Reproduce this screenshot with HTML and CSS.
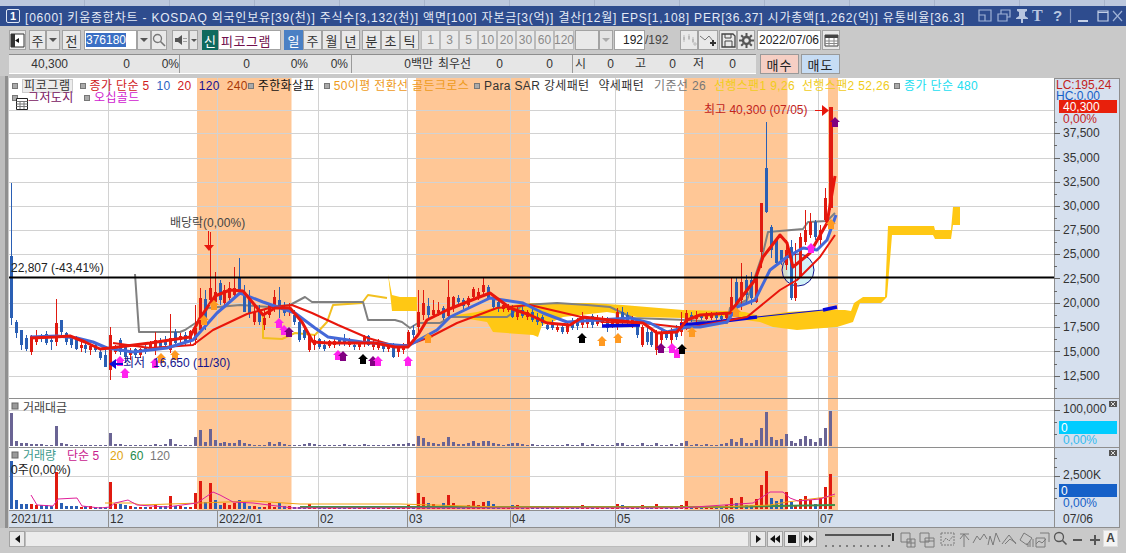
FILE: index.html
```html
<!DOCTYPE html>
<html lang="ko">
<head>
<meta charset="utf-8">
<title>키움종합차트</title>
<link rel="stylesheet" href="styles.css">
</head>
<body>
<div class="app">
  <div class="tabs"></div>
  <header class="title">
    <span class="badge">1</span>
    <span class="title-text">[0600] 키움종합차트 - KOSDAQ 외국인보유[39(천)] 주식수[3,132(천)] 액면[100] 자본금[3(억)] 결산[12월] EPS[1,108] PER[36.37] 시가총액[1,262(억)] 유통비율[36.3]</span>
    <svg class="title-icons" width="146" height="18" viewBox="0 0 146 18">
      <g fill="none" stroke="#9fb2d6" stroke-width="1.2">
        <path d="M1 3h12v11H1zM1 8h6v6"/>
        <path d="M20 7h9v7h-9zM23 7V3h9v7h-3"/>
        <path d="M92.5 2v14" stroke="#7f93bd"/>
        <path d="M120 4h10v10h-10zM120 5.5h10" stroke="#c4d0e6"/>
        <path d="M135 4l9 10M144 4l-9 10" stroke="#9fb2d6"/>
      </g>
      <path d="M39 2h10v2l-2 1v4l3 2v1h-5v4h-2v-4h-5v-1l3-2V5l-2-1z" fill="#b8c6e0"/>
      <text x="54" y="14" class="ti-t">T</text>
      <text x="75" y="14" class="ti-q">?</text>
      <path d="M100 13h10v2h-10z" fill="#c4d0e6"/>
    </svg>
  </header>

  <div class="tb">
    <button class="b w17 ico"><svg width="15" height="15" viewBox="0 0 15 15"><path d="M1 1h13v13H1z" fill="#fff" stroke="#333"/><path d="M1 1h4v13H1z" fill="#333"/><path d="M9 5L5 7.5 9 10z" fill="#111"/></svg></button>
    <button class="b w17 ml3">주</button>
    <button class="b w14 drop"><i class="tri"></i></button>
    <button class="b w19 ml2">전</button>
    <span class="field w53 ml3"><span class="sel">376180</span></span>
    <button class="b w14 drop"><i class="tri"></i></button>
    <button class="b w16 ico"><svg width="14" height="14" viewBox="0 0 14 14"><circle cx="5.5" cy="5.5" r="4" fill="none" stroke="#777" stroke-width="1.3"/><path d="M8.5 8.5l4.5 4.5" stroke="#777" stroke-width="1.6"/></svg></button>
    <button class="b w17 ml5 ico"><svg width="14" height="14" viewBox="0 0 14 14"><path d="M1 5h3l4-3v10l-4-3H1z" fill="#555"/><path d="M10 5v1M10 8v1M12 5v1M12 8v1" stroke="#555"/></svg></button>
    <button class="b w9 drop"><i class="tri small"></i></button>
    <span class="sin ml4">신</span>
    <span class="field w63 pico">피코그램</span>
    <button class="b w19 ml3 on">일</button>
    <button class="b w19">주</button>
    <button class="b w19">월</button>
    <button class="b w19">년</button>
    <button class="b w19 ml2">분</button>
    <button class="b w19">초</button>
    <button class="b w19">틱</button>
    <button class="b w19 ml2 dim">1</button>
    <button class="b w19 dim">3</button>
    <button class="b w19 dim">5</button>
    <button class="b w19 dim">10</button>
    <button class="b w19 dim">20</button>
    <button class="b w19 dim">30</button>
    <button class="b w19 dim">60</button>
    <button class="b w20 dim">120</button>
    <span class="b w24 ml1"></span>
    <button class="b w14 drop"><i class="tri light"></i></button>
    <span class="field w31 ml1 right">192</span>
    <span class="count">/192</span>
    <button class="b w18 ml8 ico"><svg width="16" height="14" viewBox="0 0 16 14"><path d="M3 2v7M8 1v6M12 4v6" stroke="#bbb"/><path d="M2 4h2v3H2zM7 3h2v3H7zM11 6h2v3h-2z" fill="#bbb"/><path d="M12 11h4M14 9v4" stroke="#bbb"/></svg></button>
    <button class="b w20 ico"><svg width="18" height="14" viewBox="0 0 18 14"><path d="M1 3l5 4 4-4 4 5" fill="none" stroke="#777"/><path d="M11 10h6M14 7v6" stroke="#333" stroke-width="2"/></svg></button>
    <button class="b w18 ml1 ico"><svg width="15" height="15" viewBox="0 0 15 15"><path d="M1 1h11l2 2v11H1z" fill="none" stroke="#444" stroke-width="1.3"/><path d="M4 1v4h6V1M4 14V8h7v6" fill="none" stroke="#444"/></svg></button>
    <button class="b w18 ico"><svg width="15" height="15" viewBox="0 0 15 15"><circle cx="7.5" cy="7.5" r="3.5" fill="none" stroke="#555" stroke-width="2.4"/><path d="M7.5 0v3M7.5 12v3M0 7.5h3M12 7.5h3M2.2 2.2l2 2M10.8 10.8l2 2M12.8 2.2l-2 2M4.2 10.8l-2 2" stroke="#555" stroke-width="2"/></svg></button>
    <span class="field w64 ml2 center">2022/07/06</span>
    <button class="b w18 ml1 ico"><svg width="15" height="13" viewBox="0 0 15 13"><path d="M1 1h13v11H1z" fill="#fff" stroke="#444"/><path d="M1 1h13v3H1z" fill="#444"/><path d="M1 7h13M1 9.5h13M5 4v8M10 4v8" stroke="#888"/></svg></button>
  </div>

  <div class="tb2">
    <div class="stats">
      <span>40,300</span><span>0</span><span class="sep">0%</span><span>0</span><span>0%</span><span class="sep pad">0%</span>
      <span>0백만</span><span>최우선</span><span>0</span><span>0</span><span class="sep"></span>
      <span>시</span><span>0</span><span>고</span><span>0</span><span>저</span><span>0</span><span></span>
    </div>
    <button class="trade buy">매수</button>
    <button class="trade sell">매도</button>
  </div>

  <main class="chart">
    <svg id="plot" width="1112" height="452" viewBox="9 76 1112 452">
      <rect x="9" y="78" width="1045" height="433" fill="#fff"/>
      <g fill="#ffc796">
        <rect x="197" y="78" width="94.5" height="432"/>
        <rect x="416" y="78" width="114" height="432"/>
        <rect x="684" y="78" width="103.5" height="432"/>
        <rect x="828" y="78" width="10" height="432"/>
      </g>
      <path id="grid" fill="none" stroke="#d2d2d2" d="M9 110.5H1054M9 133.5H1054M9 158.5H1054M9 182.5H1054M9 206.5H1054M9 230.5H1054M9 254.5H1054M9 303.5H1054M9 327.5H1054M9 351.5H1054M9 376.5H1054M9 410.5H1054M9 476.5H1054M108.5 78V511M217.5 78V511M318.5 78V511M407.5 78V511M510.5 78V511M615.5 78V511M719.5 78V511M818.5 78V511"/>
      <path class="cloud" d="M388 274L392 295L400 297H417V311H392ZM450 316L477 312L497 307L530 303L590 303L623 305L683 310L730 311L745 312L760 316L787 312L823 310L845 310L851 311L854 303L863 297H881L885 297L888 226H934L935 230H951L953 207H960V225H953L951 239H935L933 235H892L887 297L881 303H860L853 322L837 327L797 330L773 327L760 322L745 320L735 316L683 318L637 317L607 312L563 317L550 323L542 325L538 337L533 335L493 332L487 322L463 318Z"/>
      <polyline class="ln gold" points="263,315 263,338 282,339 295,333 315,335 327,322 333,305 362,303 368,295 387,298"/>
      <polyline class="ln gray" points="135,274 139,332 180,332 185,330 200,320 208,308 240,305 270,307 290,305 305,297 312,302 335,302 363,302 368,320 395,320 402,322 410,328 418,323 440,323 450,317 507,317 523,305 557,303 587,305 610,307 633,318 687,320 727,323 730,308 747,300 763,253 768,232 803,229 808,222 827,221 835,213"/>
      <circle cx="798" cy="270" r="16" fill="#aeeaf0" fill-opacity=".55" stroke="#14148c"/>
      <g id="candles"></g>
      <polyline class="ln span" points="602,326 640,325"/>
      <polyline class="ln span" points="680,325 707,323 757,317"/>
      <polyline class="ln span thin" points="757,317 823,310"/>
      <polyline class="ln span" points="823,310 837,307"/>
      <polyline class="ln ma20" points="113,343 150,348 193,345 213,330 247,314 273,307 292,305 312,313 338,325 368,338 392,345 408,345 430,337 457,323 497,308 530,305 560,312 603,322 643,323 687,328 747,317 780,290 797,280 820,257 835,235"/>
      <polyline class="ln ma10" points="30,337 57,336 77,338 93,342 107,348 133,352 167,348 193,340 217,313 240,293 263,302 295,313 315,328 328,337 362,342 395,345 408,346 437,330 450,317 490,298 523,303 543,313 567,322 630,318 650,323 667,332 687,327 700,327 727,322 737,307 755,300 770,270 787,257 803,248 817,250 827,240 836,215"/>
      <polyline class="ln ma5" points="30,338 55,337 70,336 85,342 100,349 110,348 150,343 190,337 200,318 215,296 230,290 243,291 263,315 275,308 290,308 302,322 313,342 328,343 375,343 395,347 408,347 418,335 427,320 447,310 477,298 490,293 510,308 530,315 547,323 570,325 583,317 610,320 643,323 657,333 677,332 687,320 700,315 730,313 737,303 755,280 763,257 780,235 787,243 793,267 810,253 827,223 835,176"/>
      <path d="M9 277.5H1054" stroke="#000" stroke-width="2"/>
      <g id="arrows"></g>
      <g fill="#e8160c">
        <path d="M208.5 231V245" stroke="#e8160c"/>
        <path d="M204 245h10l-5 6z"/>
        <path d="M815 110.5H823" stroke="#e8160c"/>
        <path d="M822 105l7 5.5-7 5.5z"/>
      </g>
      <path d="M109 364l7-5v4h7v2h-7v4z" fill="#0c0cd8"/>
      <text class="t" x="11" y="272">22,807 (-43,41%)</text>
      <text class="t lab" x="170" y="227">배당락(0,00%)</text>
      <text class="t navy" x="123" y="367">최저</text>
      <text class="t navy" x="153" y="367">16,650 (11/30)</text>
      <text class="t redt" x="704" y="114">최고 40,300 (07/05)</text>
      <path d="M9 398.5H1054M9 447.5H1054" stroke="#8e8e8e"/>
      <g id="bars"></g>
      <polyline class="vl" stroke="#3f8f4a" stroke-width="2" points="300,507 720,507 835,505"/>
      <polyline class="vl" stroke="#f0a010" points="105,503 133,503 140,505 200,503 253,501 300,504 400,504 500,507 720,507 770,505 787,502 835,496"/>
      <polyline class="vl" stroke="#e0209a" points="31,495 37,505 53,506 58,499 77,498 82,506 100,508 110,507 115,503 128,500 137,505 167,507 197,503 213,492 220,495 233,502 253,503 293,508 400,508 680,508 753,503 770,492 783,492 790,498 798,501 820,499 835,494"/>
      <rect x="12" y="403" width="6" height="6" fill="#9a9a9a" stroke="#666"/>
      <text class="t lab" x="23" y="412">거래대금</text>
      <rect x="12" y="452" width="6" height="6" fill="#9a9a9a" stroke="#666"/>
      <text class="t teal" x="23" y="460">거래량</text>
      <text class="t mag" x="67" y="460">단순 5</text>
      <text class="t ogold" x="110" y="460">20</text>
      <text class="t green" x="130" y="460">60</text>
      <text class="t gr" x="150" y="460">120</text>
      <text class="t" x="11" y="474">0주(0,00%)</text>

      <!-- time axis -->
      <rect x="9" y="511" width="1045" height="17" fill="#d6e0ee"/>
      <path d="M9 510.5H1120M9 527.5H1120M108.5 511V528M217.5 511V528M318.5 511V528M407.5 511V528M510.5 511V528M615.5 511V528M719.5 511V528M818.5 511V528" stroke="#8e8e8e"/>
      <text class="t ax" x="11" y="523">2021/11</text>
      <text class="t ax" x="110" y="523">12</text>
      <text class="t ax" x="219" y="523">2022/01</text>
      <text class="t ax" x="320" y="523">02</text>
      <text class="t ax" x="409" y="523">03</text>
      <text class="t ax" x="512" y="523">04</text>
      <text class="t ax" x="617" y="523">05</text>
      <text class="t ax" x="721" y="523">06</text>
      <text class="t ax" x="820" y="523">07</text>

      <!-- value axis -->
      <rect x="1054.5" y="78.5" width="65" height="449" fill="#d6e0ee" stroke="#8e8e8e"/>
      <path d="M1054 398.5H1120M1054 447.5H1120" stroke="#8e8e8e"/>
      <path d="M1054 133.5h6M1054 158.5h6M1054 182.5h6M1054 206.5h6M1054 230.5h6M1054 254.5h6M1054 278.5h6M1054 303.5h6M1054 327.5h6M1054 351.5h6M1054 376.5h6M1054 410.5h6M1054 476.5h6M1054 122.5h3M1054 145.5h3M1054 170.5h3M1054 194.5h3M1054 218.5h3M1054 242.5h3M1054 266.5h3M1054 291.5h3M1054 315.5h3M1054 339.5h3M1054 364.5h3M1054 388.5h3M1054 422.5h3M1054 434.5h3M1054 458.5h3M1054 467.5h3M1054 488.5h3M1054 498.5h3" stroke="#666"/>
      <text class="t redt" x="1056" y="89">LC:195,24</text>
      <text class="t bluet" x="1056" y="100">HC:0,00</text>
      <rect x="1059" y="100" width="58" height="13" fill="#e8200c"/>
      <text class="t wh" x="1063" y="111">40,300</text>
      <text class="t redt" x="1063" y="123">0,00%</text>
      <text class="t ax" x="1063" y="137">37,500</text>
      <text class="t ax" x="1063" y="162">35,000</text>
      <text class="t ax" x="1063" y="186">32,500</text>
      <text class="t ax" x="1063" y="210">30,000</text>
      <text class="t ax" x="1063" y="234">27,500</text>
      <text class="t ax" x="1063" y="258">25,000</text>
      <text class="t ax" x="1063" y="283">22,500</text>
      <text class="t ax" x="1063" y="307">20,000</text>
      <text class="t ax" x="1063" y="331">17,500</text>
      <text class="t ax" x="1063" y="356">15,000</text>
      <text class="t ax" x="1063" y="380">12,500</text>
      <text class="t ax" x="1063" y="413">100,000</text>
      <rect x="1059" y="421" width="58" height="13" fill="#00ccff"/>
      <text class="t wh" x="1061" y="432">0</text>
      <text class="t cyan" x="1063" y="444">0,00%</text>
      <text class="t ax" x="1063" y="479">2,500K</text>
      <rect x="1059" y="484" width="58" height="13" fill="#1560c8"/>
      <text class="t wh" x="1061" y="495">0</text>
      <text class="t bluet" x="1063" y="507">0,00%</text>
      <text class="t ax" x="1063" y="523">07/06</text>
      <g fill="#555"><rect x="1109" y="401" width="8" height="6"/><rect x="1109" y="450" width="8" height="6"/></g>
      <path d="M1111 402l4 4M1115 402l-4 4M1111 451l4 4M1115 451l-4 4" stroke="#ddd"/>
    </svg>

    <div class="legend">
      <div class="lrow">
        <i class="sq"></i><span class="pill">피코그램</span>
        <i class="sq"></i><span class="c-red">종가 단순 5</span><span class="c-blue">10</span><span class="c-red">20</span><span class="c-navy">120</span><span class="c-brown mr0">240</span>
        <i class="sq"></i><span class="c-black mr9">주한화살표</span>
        <i class="sq"></i><span class="c-orange mr5">50이평 전환선 골든크로스</span>
        <i class="sq"></i><span class="c-dark mr9">Para SAR 강세패턴</span><span class="c-dark mr10">약세패턴</span><span class="c-gray mr8">기준선 26</span><span class="c-gold">선행스팬1 9,26</span><span class="c-gold mr4">선행스팬2 52,26</span>
        <i class="sq"></i><span class="c-cyan">종가 단순 480</span>
      </div>
      <div class="lrow">
        <i class="sq"></i><span class="c-plum doji">그저도지</span>
        <i class="sq gap2"></i><span class="c-mag">오십골드</span>
      </div>
      <svg class="tableico" width="12" height="12" viewBox="0 0 12 12"><path d="M.5.5h11v11H.5z" fill="#fff" stroke="#222"/><path d="M.5 3.5h11M.5 6h11M.5 8.5h11M4 3v8M8 3v8" stroke="#777"/></svg>
    </div>
  </main>

  <footer class="bottom">
    <button class="b sbtn ico"><i class="tl"></i></button>
    <span class="track"></span>
    <button class="b pbtn ico"><i class="tr"></i></button>
    <button class="b pbtn ico"><i class="tl"></i><i class="tl"></i></button>
    <button class="b pbtn ico"><i class="st"></i></button>
    <button class="b pbtn ico"><i class="tr"></i><i class="tr"></i></button>
    <svg class="tools" width="280" height="18" viewBox="0 0 280 18">
      <path d="M2 5H68" stroke="#555" stroke-width="2"/><path d="M70 3v8" stroke="#333" stroke-width="2"/>
      <path d="M3 15v2M10 15v2M17 15v2M24 15v2M31 15v2M38 15v2M45 15v2M52 15v2M59 15v2M66 15v2" stroke="#333"/>
      <g fill="none" stroke="#7a7a7a">
        <path d="M78 3h9v9h-9zM84 9h8v8h-8zM84 13h8M88 9v8"/>
        <path d="M97 3h9v9h-9zM102 8h9v9h-9zM102 11h9"/>
        <path d="M118 3h13M118 15h13M118 3v12M131 3v12M120 12l3-4 3 3 4-5" stroke-dasharray="2 1"/>
        <path d="M137 4h9M141 4v13M137 9l4-5 5 6M150 13l4-7 3 4 4-6 3 5"/>
        <path d="M165 15l2-9 3 9 3-12 4 9"/>
        <path d="M179 14l7-9 7 9M182 14l5-5 6 4"/>
        <path d="M197 10l4-7 8 5-5 7zM203 14h2v3M207 11v6M210 9v8"/>
        <path d="M213 8h9v9h-9zM217 3h9v9M213 14l3-3 3 2 4-4"/>
      </g>
      <circle cx="236" cy="7" r="4.5" fill="none" stroke="#555" stroke-width="1.3"/><path d="M239.5 10.5l4 4" stroke="#555" stroke-width="1.6"/>
      <path d="M250 10h9M267 10h10M272 5v10" stroke="#555" stroke-width="2"/>
    </svg>
    <span class="a-btn">A</span>
  </footer>
</div>
<script src="script.js"></script>
</body>
</html>
```
FILE: styles.css
```css
* { box-sizing: border-box; }
html, body { margin: 0; padding: 0; }
body { width: 1126px; height: 553px; overflow: hidden; background: #c9c9c9; font: 12px "Liberation Sans", "Noto Sans CJK KR", sans-serif; color: #222; }
button { font: inherit; color: inherit; padding: 0; margin: 0; }
.app { display: flex; flex-direction: column; height: 553px; }

.tabs { height: 6px; flex: none; background: repeating-linear-gradient(90deg, #bcc8de 0 84px, #a7b4cc 84px 85px); }
.title { height: 20px; flex: none; display: flex; align-items: center; background: #2e4c8e; color: #e4eaf6; padding-left: 6px; white-space: nowrap; }
.badge { width: 14px; height: 14px; flex: none; border: 1px solid #dfe6f4; border-radius: 2px; text-align: center; line-height: 12px; font-weight: bold; color: #fff; font-size: 11px; }
.title-text { width: 953px; flex: none; margin-left: 5px; font-size: 12px; letter-spacing: .8px; overflow: hidden; }
.title-icons { flex: none; }
.ti-t { font: bold 16px "Liberation Serif", serif; fill: #b8c6e0; }
.ti-q { font: bold 15px "Liberation Sans", sans-serif; fill: #b8c6e0; }

.tb { height: 20px; margin-top: 4px; flex: none; display: flex; padding-left: 9px; }
.b { height: 20px; flex: none; background: #e9e9e9; border: 1px solid #a3a3a3; display: inline-flex; align-items: center; justify-content: center; font-size: 13px; color: #333; }
.ico { padding: 0; }
.w9 { width: 9px; } .w14 { width: 14px; } .w16 { width: 16px; } .w17 { width: 17px; } .w18 { width: 18px; } .w19 { width: 19px; } .w20 { width: 20px; } .w24 { width: 24px; } .w31 { width: 31px; } .w53 { width: 53px; } .w63 { width: 63px; } .w64 { width: 64px; }
.ml1 { margin-left: 1px; } .ml2 { margin-left: 2px; } .ml3 { margin-left: 3px; } .ml4 { margin-left: 4px; } .ml5 { margin-left: 5px; } .ml8 { margin-left: 8px; }
.drop { background: #e4e4e4; }
.tri { width: 0; height: 0; border: 4px solid transparent; border-top: 4px solid #555; border-bottom: 0; }
.tri.small { border-width: 3px; border-bottom: 0; border-top-color: #555; }
.tri.light { border-top-color: #aaa; }
.dim { color: #8a8a8a; font-size: 12px; border-color: #bbb; }
.on { background: #4a80c4; color: #fff; border-color: #4a80c4; }
.field { height: 20px; flex: none; background: #fff; border: 1px solid #a3a3a3; display: inline-flex; align-items: center; padding: 0 1px; font-size: 12px; }
.right { justify-content: flex-end; }
.center { justify-content: center; }
.sel { background: #3a6fc4; color: #fff; }
.sin { width: 16px; height: 20px; flex: none; background: #0f6a5e; color: #fff; display: inline-flex; align-items: center; justify-content: center; font-size: 13px; }
.pico { color: #70104c; letter-spacing: .5px; font-size: 13px; padding-left: 2px; }
.count { width: 27px; flex: none; font-size: 12px; color: #444; line-height: 20px; }

.tb2 { height: 20px; margin-top: 4px; flex: none; display: flex; padding-left: 9px; }
.stats { display: grid; grid-template-columns: 59px 62px 50px 70px 58px 44px 81px 38px 32px 50px 20px 13px 28px 32px 30px 28px 32px 20px; width: 747px; height: 20px; background: #e6e6e6; border-top: 1px solid #8e8e8e; border-bottom: 1px solid #fff; font-size: 12px; line-height: 18px; color: #333; }
.stats span { text-align: right; white-space: nowrap; }
.stats .sep { border-right: 1px solid #9a9a9a; }
.stats .pad { padding-right: 3px; }
.trade { width: 39px; height: 20px; flex: none; border: 1px solid #999; font-size: 13px; letter-spacing: 1px; }
.buy { background: #f6cfc4; margin-left: 4px; }
.sell { background: #c6dcf4; margin-left: 2px; }

.chart { position: relative; height: 452px; flex: none; margin-top: 2px; padding-left: 9px; background: linear-gradient(90deg, #bdbdbd 0 5px, #8f8f8f 5px 8px, #c9c9c9 8px); }
#plot { display: block; }
.t { font-size: 12px; fill: #222; font-family: "Liberation Sans", "Noto Sans CJK KR", sans-serif; }
.lab { fill: #444; }
.navy { fill: #14148c; }
.redt { fill: #c2231c; }
.bluet { fill: #1560c8; }
.wh { fill: #fff; }
.cyan { fill: #33bbee; }
.ax { fill: #333; }
.teal { fill: #3b9a8c; }
.mag { fill: #c8208e; }
.ogold { fill: #e0a410; }
.green { fill: #1d8a4a; }
.gr { fill: #777; }
.cloud { fill: #ffc814; }
.ln { fill: none; stroke-linejoin: round; }
.gold { stroke: #f2c020; stroke-width: 2; }
.gray { stroke: #808080; stroke-width: 2; }
.span { stroke: #0808d8; stroke-width: 3.5; }
.span.thin { stroke-width: 1; }
.ma5 { stroke: #e8160c; stroke-width: 3; }
.ma10 { stroke: #4468d8; stroke-width: 3; }
.ma20 { stroke: #e8160c; stroke-width: 2; }
.vl { fill: none; }

.legend { position: absolute; left: 12px; top: 4px; font-size: 12px; line-height: 13px; white-space: nowrap; letter-spacing: .35px; }
.lrow { display: flex; align-items: center; height: 12px; }
.lrow span { margin-right: 7px; }
.lrow .mr0 { margin-right: 0; }
.lrow .mr4 { margin-right: 4px; }
.lrow .mr5 { margin-right: 5px; }
.lrow .mr8 { margin-right: 8px; }
.lrow .mr9 { margin-right: 9px; }
.lrow .mr10 { margin-right: 10px; }
.sq { width: 6px; height: 6px; flex: none; background: #aaa; border: 1px solid #777; margin-right: 4px; }
.pill { background: #ececec; border: 1px solid #ccc; padding: 0 1px; height: 14px; color: #333; font-size: 12px; letter-spacing: .6px; }
.c-red { color: #d0201c; }
.c-blue { color: #2a62c4; }
.c-navy { color: #201090; }
.c-brown { color: #a83808; }
.c-black { color: #111; }
.c-orange { color: #ee9a1a; }
.c-dark { color: #333; }
.c-gray { color: #777; }
.c-gold { color: #f0cc1a; }
.c-cyan { color: #22ddf0; }
.c-plum { color: #7a1560; }
.c-mag { color: #d020d0; }
.doji { margin-left: 6px; width: 48px; }
.gap2 { margin-left: 1px; }
.tableico { position: absolute; left: 4px; top: 18px; }

.bottom { height: 19px; flex: none; margin-top: 1px; padding-left: 9px; display: flex; align-items: center; }
.sbtn { width: 16px; height: 16px; }
.track { width: 724px; height: 16px; flex: none; background: #ececec; border: 1px solid #bcbcbc; }
.pbtn { width: 16px; height: 16px; margin-left: 1px; }
.tl, .tr { width: 0; height: 0; border: 4px solid transparent; border-left: 0; border-right: 5px solid #111; }
.tr { border-right: 0; border-left: 5px solid #111; }
.st { width: 8px; height: 8px; background: #111; }
.tools { flex: none; margin-left: 6px; }
.a-btn { width: 15px; height: 17px; flex: none; background: #f4f4f4; border: 1px solid #ddd; font: bold 12px/15px "Liberation Sans", sans-serif; color: #444; text-align: center; }
```
FILE: script.js
```js
var NS = 'http://www.w3.org/2000/svg';
function el(parent, tag, attrs) {
  var n = document.createElementNS(NS, tag);
  for (var k in attrs) n.setAttribute(k, attrs[k]);
  parent.appendChild(n);
  return n;
}
function xAt(i) { return Math.round(11 + i * 4.965); }

var RED = '#e01a10', BLUE = '#2a5fb4', PUR = '#6a6494';

// colour (1 up, 0 down), high, body top, body bottom, low — page y
var candles = [
[0,183,256,318,325],[0,320,322,333,338],[0,330,330,345,350],[0,335,338,349,351],[1,335,337,352,355],[1,330,338,342,345],[0,334,336,339,342],[0,331,334,343,345],[0,338,340,342,350],[1,299,323,342,346],
[0,320,320,332,338],[0,332,333,342,345],[0,335,336,345,348],[0,336,338,349,350],[1,342,345,348,352],[0,343,345,349,353],[1,344,346,350,355],[0,344,345,350,352],[0,349,352,358,360],[0,350,355,367,367],
[1,327,335,370,380],[1,345,348,352,354],[0,338,340,352,355],[0,345,345,357,363],[1,348,351,355,360],[0,348,349,355,358],[1,348,349,355,358],[0,345,348,352,354],[1,341,342,348,350],[1,332,340,350,355],
[0,338,342,347,350],[0,336,340,345,348],[1,314,338,350,353],[0,329,332,343,345],[1,333,336,340,343],[0,332,335,342,346],[1,330,331,340,345],[1,305,328,340,345],[1,288,298,330,333],[0,290,299,320,330],
[1,232,288,300,305],[1,272,292,302,305],[0,280,283,300,305],[1,285,290,303,305],[1,282,288,298,300],[1,267,288,295,298],[0,258,278,290,292],[0,285,293,312,312],[0,290,297,313,318],[1,305,312,322,325],
[0,305,312,322,325],[1,309,318,325,330],[1,305,305,315,318],[1,290,297,308,312],[0,287,300,307,318],[0,302,307,313,316],[1,303,307,312,316],[0,310,315,322,325],[0,315,322,340,342],[0,325,330,338,340],
[1,335,335,350,352],[1,335,340,345,350],[0,338,339,347,349],[0,340,345,349,351],[1,340,341,346,348],[1,339,341,345,348],[0,338,340,344,346],[0,334,338,344,346],[1,338,340,345,347],[0,342,345,347,350],
[1,341,344,347,350],[1,335,337,344,347],[0,335,336,345,346],[1,340,343,347,350],[1,339,342,348,350],[0,342,344,349,352],[1,343,344,349,352],[0,343,348,357,358],[1,345,348,352,357],[1,343,345,350,354],
[1,330,332,345,348],[0,325,330,335,338],[1,290,312,327,335],[1,290,303,315,320],[0,298,306,315,318],[1,300,310,315,318],[1,302,310,313,316],[0,306,308,318,320],[1,280,297,316,318],[1,296,297,308,312],
[0,295,298,302,305],[0,298,300,306,309],[1,296,298,305,307],[1,287,289,297,300],[1,288,292,296,300],[1,278,285,292,295],[0,285,287,298,300],[0,295,297,307,310],[0,300,302,308,312],[1,303,305,309,312],
[1,304,306,310,312],[0,305,308,317,318],[1,306,310,317,320],[0,306,310,316,318],[1,310,312,317,320],[0,308,312,320,322],[0,313,317,322,325],[0,315,317,323,326],[0,322,325,329,330],[0,320,324,328,330],
[1,325,327,330,332],[0,325,327,332,334],[1,322,325,332,334],[0,318,322,328,330],[0,318,322,326,330],[1,312,318,325,328],[1,316,318,324,328],[0,314,316,325,328],[1,315,318,324,326],[1,316,318,323,326],
[0,317,320,328,332],[1,318,320,325,328],[1,308,312,325,330],[0,307,312,322,326],[0,312,315,322,325],[1,316,318,325,328],[0,322,325,335,338],[1,325,327,345,347],[0,328,332,342,345],[0,328,332,345,347],
[1,330,332,350,355],[1,330,332,340,345],[0,330,332,338,340],[1,328,332,340,345],[0,325,330,337,340],[1,312,322,332,336],[1,310,313,327,330],[0,312,315,318,322],[1,311,315,319,322],[0,314,315,318,320],
[1,312,314,319,320],[1,312,313,318,320],[0,312,314,318,320],[0,315,316,319,320],[1,313,314,318,320],[1,278,297,312,314],[0,277,282,305,312],[1,263,282,300,310],[0,275,280,295,305],[0,272,280,298,305],
[1,273,275,302,303],[1,203,203,252,268],[0,122,168,212,213],[0,225,227,250,258],[0,240,240,263,265],[0,250,250,260,265],[1,240,250,265,270],[0,240,247,298,300],[1,243,283,298,301],[1,233,237,277,278],
[1,210,230,242,245],[1,213,222,235,238],[0,220,222,237,240],[1,225,230,240,245],[1,188,198,220,222],[1,107,107,208,210]
];

// volume bar heights, px above the pane baseline
var vol = [48,9,5,5,5,4,4,4,3,37,6,3,3,3,2,3,3,2,2,2,27,5,5,4,3,2,2,2,2,5,3,3,13,3,3,2,2,16,28,7,26,9,4,6,4,6,9,7,3,3,2,2,6,2,6,3,3,2,2,
3,5,3,2,2,2,2,2,3,2,2,2,3,2,2,2,2,2,3,3,3,4,3,16,12,6,5,3,6,14,6,3,3,4,8,4,7,8,5,3,2,3,4,4,3,2,3,2,2,2,2,1,2,3,2,2,4,2,3,2,2,2,2,5,4,2,2,2,4,2,2,5,2,2,3,2,4,8,2,3,2,3,2,2,3,4,
11,6,12,4,4,10,24,38,11,8,10,17,7,4,10,13,9,5,11,22,35];
var head = [33,5,3,3,2,2,2,1,1,20,3,2,1,1,1,1,1,1,1,1,13,2,2,1,1,1,1,1,1,2,1,2,7,2,1,1,1,9,16,4,17,6,3,4,3,3,6,3,2,1,1,1,4,2,4,2,1,1,1];
var tail = [7,4,8,3,3,6,18,34,9,6,7,12,5,3,7,10,7,4,8,18,35];

function value(i) {
  if (i < head.length) return head[i];
  if (i >= 145) return tail[i - 145];
  return Math.max(1, Math.round(vol[i] * 0.65));
}
var volUp = { 41: 0, 152: 1 };

var cg = document.getElementById('candles');
var bg = document.getElementById('bars');
candles.forEach(function (c, i) {
  var x = xAt(i), col = c[0] ? RED : BLUE;
  el(cg, 'rect', { x: x, y: c[1], width: 1, height: c[4] - c[1], fill: col });
  var w = i === 165 ? 4 : 3;
  el(cg, 'rect', { x: x - 1, y: c[2], width: w, height: Math.max(1, c[3] - c[2]), fill: col });
  var up = (i in volUp) ? volUp[i] : c[0];
  var h3 = vol[i] || 1;
  el(bg, 'rect', { x: x - 1, y: 509 - h3, width: 3, height: h3, fill: up ? RED : BLUE });
  var h2 = value(i);
  el(bg, 'rect', { x: x - 1, y: 446 - h2, width: 3, height: h2, fill: PUR });
});

var COL = { m: '#ff22ee', p: '#800080', k: '#000', o: '#ff9a22' };
var arrows = [
['m',120,356],['m',125,368],['m',155,358],['o',161,353],['o',175,350],['o',204,315],['o',214,300],
['m',279,318],['m',284,325],['p',289,327],['m',338,350],['p',343,351],['k',363,354],['p',373,356],['m',378,356],['m',408,356],
['o',428,333],['k',582,333],['o',602,336],['o',618,333],['p',661,343],['m',672,343],['m',677,348],['k',682,344],
['o',692,327],['o',736,307],['m',811,243],['o',831,219],['p',835,117]
];
var ag = document.getElementById('arrows');
arrows.forEach(function (a) {
  var x = a[1], y = a[2];
  el(ag, 'polygon', {
    fill: COL[a[0]],
    points: [[x, y], [x + 5, y + 5], [x + 3, y + 5], [x + 3, y + 10], [x - 3, y + 10], [x - 3, y + 5], [x - 5, y + 5]].join(' ')
  });
});
```
